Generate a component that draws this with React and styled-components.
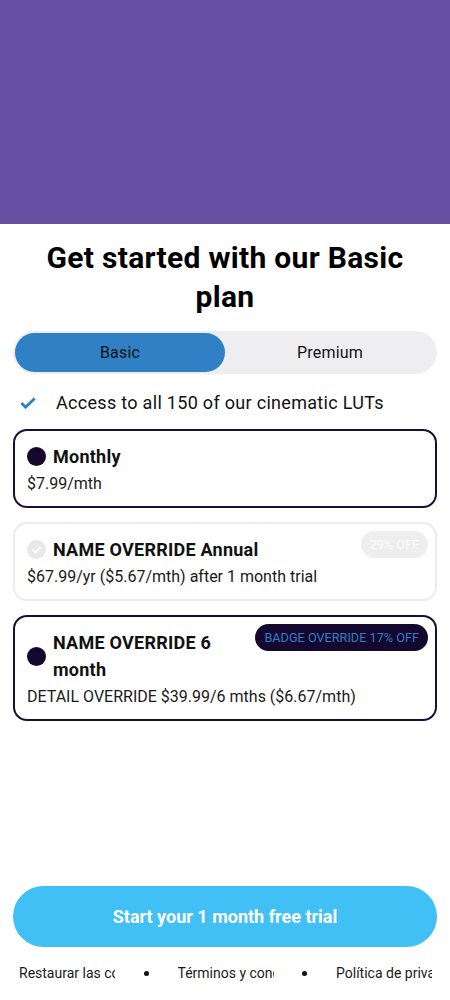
import React, { useState } from 'react'
import styled, { createGlobalStyle } from 'styled-components'

const GlobalStyle = createGlobalStyle`
  html, body {
    margin: 0;
    padding: 0;
    background: #ffffff;
  }
  body {
    font-family: Roboto, "Noto Sans", "Liberation Sans", sans-serif;
    color: #111;
  }
  * { box-sizing: border-box; }
`

const Page = styled.div`
  width: 450px;
  min-height: 1000px;
  display: flex;
  flex-direction: column;
`

const Hero = styled.div`
  height: 224px;
  background: #6750a3;
`

const Body = styled.div`
  flex: 1;
  display: flex;
  flex-direction: column;
  padding: 0 13px;
`

const Title = styled.h1`
  margin: 14px 0 15px;
  font-size: 30px;
  line-height: 39px;
  font-weight: 700;
  letter-spacing: 0.3px;
  text-align: center;
  color: #000;
  padding: 0 30px;
`

const Toggle = styled.div`
  display: grid;
  grid-template-columns: 1fr 1fr;
  height: 43px;
  padding: 2px;
  border-radius: 22px;
  background: #eeeef0;
`

const ToggleOption = styled.button`
  border: none;
  border-radius: 20px;
  font-family: inherit;
  font-size: 16px;
  letter-spacing: 0.2px;
  color: #111;
  cursor: pointer;
  background: ${p => (p.active ? '#2f80c4' : 'transparent')};
`

const Feature = styled.div`
  display: flex;
  align-items: center;
  gap: 20px;
  padding: 0 7px;
  margin: 17px 0 14px;
  font-size: 18px;
  letter-spacing: 0.3px;
  line-height: 24px;
  color: #111;
`

const PlanList = styled.div`
  display: flex;
  flex-direction: column;
  gap: 14px;
`

const Card = styled.div`
  border: 2px solid ${p => (p.muted ? '#ececee' : '#1b0d3a')};
  border-radius: 14px;
  padding: 12px;
  display: flex;
  flex-direction: column;
  gap: 4px;
`

const CardHead = styled.div`
  display: flex;
  align-items: center;
  gap: 7px;
`

const Dot = styled.span`
  flex: none;
  width: 19px;
  height: 19px;
  border-radius: 50%;
  background: #14082f;
`

const PlanName = styled.div`
  flex: 1;
  font-size: 18px;
  line-height: 27px;
  letter-spacing: 0.25px;
  font-weight: 700;
  color: #111;
`

const Badge = styled.span`
  flex: none;
  align-self: flex-start;
  margin: -5px -5px 0 0;
  height: 27px;
  padding: 0 9px;
  border-radius: 14px;
  display: flex;
  align-items: center;
  font-size: 12.7px;
  background: ${p => (p.muted ? '#eeeeef' : '#14082f')};
  color: ${p => (p.muted ? '#fafafa' : '#2f7fc3')};
`

const Price = styled.div`
  font-size: 16px;
  line-height: 20px;
  color: #1a1a1a;
`

const Spacer = styled.div`
  flex: 1;
`

const CTA = styled.button`
  height: 61px;
  border: none;
  border-radius: 31px;
  background: #41c0f6;
  color: #fff;
  font-family: inherit;
  font-size: 18px;
  font-weight: 700;
  cursor: pointer;
`

const Footer = styled.div`
  display: flex;
  align-items: center;
  justify-content: space-between;
  padding: 0 18px 0 19px;
  height: 52px;
  margin-bottom: 1px;
`

const FooterLink = styled.span`
  width: 96px;
  overflow: hidden;
  white-space: nowrap;
  font-size: 14px;
  color: #1a1a1a;
`

const Bullet = styled.span`
  width: 5px;
  height: 5px;
  border-radius: 50%;
  background: #111;
`

const Check = () => (
  <svg width="16" height="12" viewBox="0 0 16 12">
    <path d="M1.4 6 L5.6 10.2 L14.6 1.4" fill="none" stroke="#2f80c4" strokeWidth="2.8" />
  </svg>
)

const MutedCheck = () => (
  <svg width="19" height="19" viewBox="0 0 19 19" style={{ flex: 'none' }}>
    <circle cx="9.5" cy="9.5" r="9.5" fill="#e8e8ea" />
    <path d="M5.5 9.7 L8.3 12.4 L13.6 7" fill="none" stroke="#fff" strokeWidth="1.8" />
  </svg>
)

const plans = [
  { id: 'monthly', name: 'Monthly', price: '$7.99/mth' },
  {
    id: 'annual',
    name: 'NAME OVERRIDE Annual',
    price: '$67.99/yr ($5.67/mth) after 1 month trial',
    badge: '29% OFF',
    muted: true,
  },
  {
    id: 'six',
    name: 'NAME OVERRIDE 6 month',
    price: 'DETAIL OVERRIDE $39.99/6 mths ($6.67/mth)',
    badge: 'BADGE OVERRIDE 17% OFF',
  },
]

const App = () => {
  const [tier, setTier] = useState('basic')

  return (
    <Page>
      <GlobalStyle />
      <Hero />
      <Body>
        <Title>Get started with our Basic plan</Title>
        <Toggle>
          <ToggleOption active={tier === 'basic'} onClick={() => setTier('basic')}>Basic</ToggleOption>
          <ToggleOption active={tier === 'premium'} onClick={() => setTier('premium')}>Premium</ToggleOption>
        </Toggle>
        <Feature>
          <Check />
          Access to all 150 of our cinematic LUTs
        </Feature>
        <PlanList>
          {plans.map(p => (
            <Card key={p.id} muted={p.muted}>
              <CardHead>
                {p.muted ? <MutedCheck /> : <Dot />}
                <PlanName>{p.name}</PlanName>
                {p.badge && <Badge muted={p.muted}>{p.badge}</Badge>}
              </CardHead>
              <Price>{p.price}</Price>
            </Card>
          ))}
        </PlanList>
        <Spacer />
        <CTA>Start your 1 month free trial</CTA>
      </Body>
      <Footer>
        <FooterLink>Restaurar las compras</FooterLink>
        <Bullet />
        <FooterLink>Términos y condiciones</FooterLink>
        <Bullet />
        <FooterLink>Política de privacidad</FooterLink>
      </Footer>
    </Page>
  )
}

export default App
